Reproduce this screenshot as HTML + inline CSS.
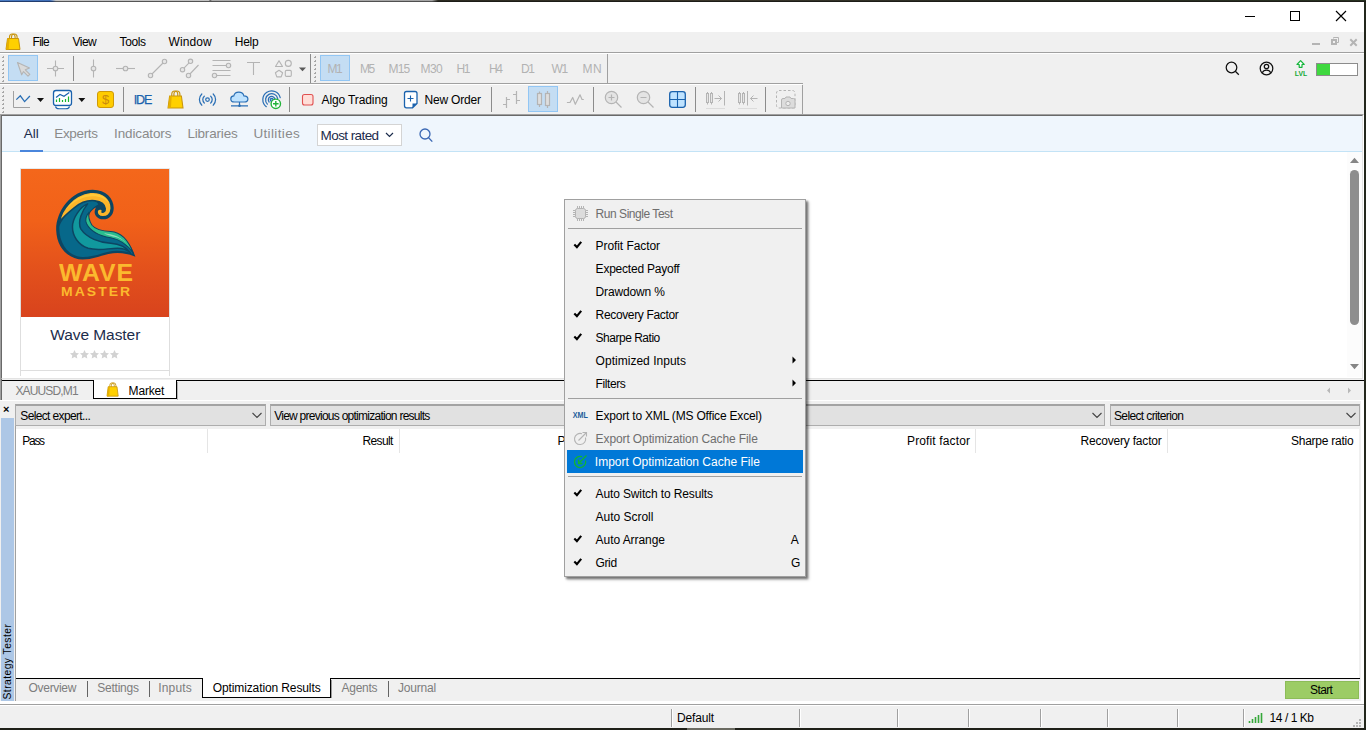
<!DOCTYPE html>
<html lang="en"><head>
<meta charset="utf-8">
<title>MetaTrader 5 - Strategy Tester</title>
<style>
*{box-sizing:border-box;margin:0;padding:0}
html,body{width:1366px;height:730px;overflow:hidden}
body{position:relative;background:#23271c;font-family:"Liberation Sans",sans-serif;font-size:12px;color:#000}
div,span,svg{position:absolute}
svg{overflow:visible;left:0;top:0}
.win{left:0;top:2px;width:1364px;height:726px;background:#f0f0f0}
.t{white-space:nowrap;line-height:16px;height:16px;font-size:12px}
.g{color:#b2b2b2}
.dg{color:#7d7d7d}
.h{height:1px;left:0}
.v{width:1px}
.sep{width:1px;background:#8c8c8c}
.selbtn{background:#c4ddf3;border:1px solid #92c6f4}
.combo{background:#e1e1e1;border:1px solid #adadad;border-top:2px solid #a3a3a3;height:22px;top:404px}
.mk{font-size:13.5px;color:#8a8a8a}
.mi{font-size:12px;color:#000}
.col{top:429px;width:1px;height:24px;background:#e5e5e5}
.sdiv{top:709px;width:2px;height:18px;background:#fff;border-left:1px solid #a0a0a0}
</style>
</head>
<body>
<div class="win"></div>
<!-- title bar -->
<div style="left:0;top:2px;width:1364px;height:30px;background:#fff"></div>
<!-- menu bar -->
<span class="t" style="left: 32.6px; letter-spacing: -0.75px; top: 34px;">File</span>
<span class="t" style="left: 72.6px; letter-spacing: -0.58px; top: 34px;">View</span>
<span class="t" style="left: 119.6px; letter-spacing: -0.4px; top: 34px;">Tools</span>
<span class="t" style="left: 168.6px; letter-spacing: 0.08px; top: 34px;">Window</span>
<span class="t" style="left: 234.8px; letter-spacing: -0.27px; top: 34px;">Help</span>
<!-- toolbar lines -->
<div class="h" style="top:52px;width:1364px;background:#a0a0a0"></div>
<div class="h" style="top:53px;width:1364px;background:#fff"></div>
<div class="h" style="top:83px;width:803px;background:#a0a0a0"></div>
<div class="h" style="top:84px;width:802px;background:#fff"></div>
<div class="v" style="left:802px;top:85px;height:29px;background:#a0a0a0"></div>
<div class="v" style="left:607px;top:54px;height:29px;background:#a0a0a0"></div>
<!-- toolbar 1 -->
<div class="selbtn" style="left:8px;top:55px;width:30px;height:26px"></div>
<div class="sep" style="left:73px;top:56px;height:25px"></div>
<div class="sep" style="left:310px;top:54px;height:29px"></div>
<div class="selbtn" style="left:320px;top:55px;width:30px;height:26px"></div>
<span class="t g" style="left: 327.6px; letter-spacing: -1.5px; top: 61px;">M1</span>
<span class="t g" style="left: 360px; letter-spacing: -1.4px; top: 61px;">M5</span>
<span class="t g" style="left: 388.6px; letter-spacing: -0.83px; top: 61px;">M15</span>
<span class="t g" style="left: 420.6px; letter-spacing: -0.63px; top: 61px;">M30</span>
<span class="t g" style="left: 456.6px; letter-spacing: -1.5px; top: 61px;">H1</span>
<span class="t g" style="left: 489px; letter-spacing: -1.5px; top: 61px;">H4</span>
<span class="t g" style="left: 521px; letter-spacing: -1.5px; top: 61px;">D1</span>
<span class="t g" style="left: 551.6px; letter-spacing: -1.5px; top: 61px;">W1</span>
<span class="t g" style="left: 582.4px; letter-spacing: 0.6px; top: 61px;">MN</span>
<!-- toolbar 2 -->
<div class="sep" style="left:123px;top:87px;height:25px"></div>
<div class="sep" style="left:289px;top:87px;height:25px"></div>
<div class="sep" style="left:491px;top:87px;height:25px"></div>
<div class="sep" style="left:593px;top:87px;height:25px"></div>
<div class="sep" style="left:695px;top:87px;height:25px"></div>
<div class="sep" style="left:765px;top:87px;height:25px"></div>
<div class="selbtn" style="left:528px;top:86px;width:30px;height:26px"></div>
<span class="t" style="color: rgb(26, 98, 173); font-size: 12.5px; -webkit-text-stroke: 0.25px rgb(26, 98, 173); left: 133.8px; letter-spacing: -1.15px; top: 92px;">IDE</span>
<span class="t" style="left: 321.5px; letter-spacing: -0.11px; top: 92px;">Algo Trading</span>
<span class="t" style="left: 424.5px; letter-spacing: -0.19px; top: 92px;">New Order</span>
<!-- market pane -->
<div style="left:0;top:114px;width:1364px;height:266px;background:#fff;border-top:1px solid #a0a0a0;border-left:1px solid #a0a0a0;border-right:1px solid #fff;border-bottom:1px solid #f0f0f0"></div>
<div style="left:1px;top:115px;width:1362px;height:264px;border-top:1px solid #696969;border-left:1px solid #696969;border-right:1px solid #e3e3e3;border-bottom:1px solid #e3e3e3"></div>
<div style="left:2px;top:116px;width:1360px;height:35px;background:#eff6fd"></div>
<div class="h" style="left:2px;top:151px;width:1360px;background:#c3e3f6"></div>
<div style="left:20px;top:150px;width:23px;height:2px;background:#4a86dc"></div>
<span class="t mk" style="color: rgb(28, 44, 76); left: 23.8px; top: 125.9px;">All</span>
<span class="t mk" style="left: 54.3px; letter-spacing: -0.34px; top: 125.9px;">Experts</span>
<span class="t mk" style="left: 114px; letter-spacing: -0.12px; top: 125.9px;">Indicators</span>
<span class="t mk" style="left: 187.4px; letter-spacing: -0.18px; top: 125.9px;">Libraries</span>
<span class="t mk" style="left: 253.4px; letter-spacing: 0.36px; top: 125.9px;">Utilities</span>
<div style="left:317px;top:124px;width:85px;height:22px;background:#fff;border:1px solid #d4d4d4"></div>
<span class="t" style="font-size: 13.5px; color: rgb(28, 44, 76); left: 320.6px; letter-spacing: -0.59px; top: 127.5px;">Most rated</span>
<!-- card -->
<div style="left:20px;top:168px;width:150px;height:208px;border-left:1px solid #dedede;border-right:1px solid #dedede"></div>
<div class="h" style="left:20px;top:370px;width:150px;background:#dedede"></div>
<div class="h" style="left:20px;top:168px;width:150px;background:#e6ebee"></div>
<div style="left:21px;top:169px;width:148px;height:148px;background:linear-gradient(180deg,#f4671b 0%,#f16119 35%,#e2501c 70%,#d8431d 100%)"></div>
<span class="t" style="font-size: 15.5px; color: rgb(28, 44, 76); line-height: 20px; height: 20px; left: 50.2px; letter-spacing: -0.06px; top: 324.5px;">Wave Master</span>
<!--LOGO-->
<svg width="92" height="82" viewBox="0 0 819 730" style="left:50px;top:182px">
 <path d="M760 665C700 640 620 620 520 640C440 660 380 690 290 690C170 690 60 590 55 430C50 270 180 70 380 68C500 68 570 150 567 235C565 300 520 335 470 332C425 330 392 295 398 260C400 245 405 235 410 228C360 250 330 310 350 360C375 420 450 455 540 458C640 460 720 540 760 665Z" fill="#0c4663"></path>
 <path d="M82 400C120 300 230 180 330 165C380 158 420 175 430 200C400 215 345 250 332 320C335 400 420 470 540 480C630 485 700 540 738 642C680 615 600 605 520 620C440 640 370 670 290 668C180 665 82 570 82 400Z" fill="#07688a"></path>
 <path d="M335 195C270 220 200 320 200 400C200 480 250 560 340 590C430 615 520 590 600 590C650 590 690 605 715 630C680 580 620 550 540 545C440 540 330 500 275 420C240 350 290 250 335 195Z" fill="#11999e" stroke="#0c4663" stroke-width="13" stroke-linejoin="round"></path>
 <path d="M348 268C338 310 352 350 374 385C402 420 462 438 540 441C622 446 692 502 740 632C692 562 622 512 540 497C450 482 362 442 326 372C310 340 322 300 348 268Z" fill="#2bbd8e" stroke="#0c4663" stroke-width="9" stroke-linejoin="round"></path>
 <path d="M480 455C560 470 640 480 722 592C680 530 620 495 560 485C530 478 500 470 480 455Z" fill="#93dfbc"></path>
 <path d="M85 355C100 250 200 115 360 92C470 82 548 150 545 235C543 290 505 312 468 310C435 307 415 285 420 260C424 243 440 236 455 242C470 250 468 262 462 268C478 272 494 260 492 236C488 200 450 174 400 167C340 160 275 180 215 230C155 278 112 318 85 355Z" fill="#fbb52a" stroke="#0c4663" stroke-width="13" stroke-linejoin="round"></path>
 <path d="M140 245C200 160 285 115 362 106C440 100 505 135 525 190C485 130 400 116 320 134C250 150 190 195 140 245Z" fill="#ffc938"></path>
</svg>
<span class="t" style="font-size: 23px; font-weight: bold; color: rgb(251, 185, 46); line-height: 26px; height: 26px; transform: scaleX(1.08); transform-origin: 0px 0px; left: 58.9px; letter-spacing: 0.82px; top: 260.3px;">WAVE</span>
<span class="t" style="font-size: 13.3px; font-weight: bold; color: rgb(251, 185, 46); transform: scaleX(1.05); transform-origin: 0px 0px; left: 60.6px; letter-spacing: 1.95px; top: 283.9px;">MASTER</span>
<!--/LOGO-->
<!-- scrollbar -->
<div style="left:1347px;top:152px;width:15px;height:225px;background:#fcfcfc"></div>
<div style="left:1350px;top:170px;width:9px;height:155px;border-radius:4.500px;background:#8e8e8e"></div>
<!-- chart tabs -->
<div style="left:0;top:380px;width:1364px;height:20px;background:#f0f0f0"></div>
<div class="v" style="left:0;top:116px;height:284px;background:#a0a0a0"></div><div class="v" style="left:1px;top:379px;height:21px;background:#696969"></div>
<div class="h" style="left:2px;top:380px;width:92px;background:#000"></div>
<div class="h" style="left:176px;top:380px;width:1188px;background:#000"></div>
<div style="left:93px;top:380px;width:84px;height:19px;background:#fff;border:1px solid #000;border-top:0"></div>
<div class="v" style="left:177px;top:382px;height:18px;background:#b4b4b4"></div>
<span class="t dg" style="left: 15.4px; letter-spacing: -0.84px; top: 383px;">XAUUSD,M1</span>
<span class="t" style="left: 128.6px; letter-spacing: -0.19px; top: 383px;">Market</span>
<!-- strategy tester -->
<div style="left:1px;top:418px;width:13px;height:284px;background:#adc7e6"></div>
<div class="v" style="left:15px;top:404px;height:297px;background:#a0a0a0"></div>
<div style="left:16px;top:429px;width:1343px;height:249px;background:#fff"></div>
<div class="h" style="left:16px;top:678px;width:1344px;background:#000"></div>
<div style="left:1361px;top:400px;width:3px;height:304px;background:#fff"></div>
<div class="h" style="left:0;top:400px;width:1364px;background:#fff"></div>
<span class="t" style="left:3px;top:401px;font-weight:bold;font-size:11px">×</span>
<div class="combo" style="left:15px;width:251px"></div>
<div class="combo" style="left:270px;width:835px"></div>
<div class="combo" style="left:1110px;width:250px"></div>
<span class="t" style="left: 20.3px; letter-spacing: -0.64px; top: 408px;">Select expert...</span>
<span class="t" style="left: 274.2px; letter-spacing: -0.74px; top: 408px;">View previous optimization results</span>
<span class="t" style="left: 1114px; letter-spacing: -0.63px; top: 408px;">Select criterion</span>
<div class="col" style="left:207px"></div><div class="col" style="left:399px"></div><div class="col" style="left:591px"></div><div class="col" style="left:783px"></div><div class="col" style="left:975px"></div><div class="col" style="left:1167px"></div>
<span class="t" style="left: 22.3px; letter-spacing: -1.29px; top: 433px;">Pass</span>
<span class="t" style="left: 362.5px; letter-spacing: -0.64px; top: 433px;">Result</span>
<span class="t" style="left: 557.5px; letter-spacing: -0.03px; top: 433px;">Profit</span>
<span class="t" style="left: 744px; letter-spacing: -0.58px; top: 433px;">Trades</span>
<span class="t" style="left: 907px; letter-spacing: 0.14px; top: 433px;">Profit factor</span>
<span class="t" style="left: 1080.5px; letter-spacing: -0.2px; top: 433px;">Recovery factor</span>
<span class="t" style="left: 1291px; letter-spacing: -0.25px; top: 433px;">Sharpe ratio</span>
<!-- bottom tabs -->
<div style="left:202px;top:678px;width:129px;height:20px;background:#fff;border:1px solid #000;border-top:0"></div>
<div class="v" style="left:331px;top:680px;height:18px;background:#9a9a9a"></div>
<span class="t dg" style="left: 28.6px; letter-spacing: -0.32px; top: 680px;">Overview</span>
<span class="t dg" style="left: 97.2px; letter-spacing: -0.22px; top: 680px;">Settings</span>
<span class="t dg" style="left: 158.3px; letter-spacing: 0.16px; top: 680px;">Inputs</span>
<span class="t" style="left: 212.7px; letter-spacing: -0.11px; top: 680px;">Optimization Results</span>
<span class="t dg" style="left: 341.5px; letter-spacing: -0.25px; top: 680px;">Agents</span>
<span class="t dg" style="left: 398px; letter-spacing: -0.2px; top: 680px;">Journal</span>
<div class="v" style="left:87px;top:681px;height:16px;background:#646464"></div>
<div class="v" style="left:149px;top:681px;height:16px;background:#646464"></div>
<div class="v" style="left:388px;top:681px;height:16px;background:#646464"></div>
<div style="left:1285px;top:681px;width:74px;height:18px;background:#9ccc65;border:1px solid #8cbc58"></div>
<span class="t" style="left: 1310px; letter-spacing: -0.6px; top: 682px;">Start</span>
<span class="t" style="left:0;top:0;transform-origin:0 0;transform:translate(0px,699.500px) rotate(-90deg);font-size:10.300px;letter-spacing:.45px">Strategy Tester</span>
<!-- status bar -->
<div style="left:0;top:701px;width:1364px;height:3px;background:#fff"></div>
<div class="h" style="top:704px;width:1364px;background:#a0a0a0"></div>
<div class="h" style="top:705px;width:1364px;background:#fff"></div>
<div class="sdiv" style="left:671px"></div><div class="sdiv" style="left:799px"></div><div class="sdiv" style="left:897px"></div><div class="sdiv" style="left:968px"></div><div class="sdiv" style="left:1040px"></div><div class="sdiv" style="left:1107px"></div><div class="sdiv" style="left:1177px"></div><div class="sdiv" style="left:1243px"></div>
<span class="t" style="left: 677px; letter-spacing: -0.15px; top: 710px;">Default</span>
<span class="t" style="left: 1269.6px; letter-spacing: -0.45px; top: 710px;">14 / 1 Kb</span>
<!--ICONS-->
<svg width="1366" height="730" viewBox="0 0 1366 730">
<!-- window controls -->
<g stroke="#000" fill="none" stroke-width="1">
 <path d="M1245 16.500h10"></path>
 <rect x="1290.500" y="11.500" width="9" height="9"></rect>
 <path d="M1336 11l10 10M1346 11l-10 10" stroke-width="1.15"></path>
</g>
<!-- mdi controls -->
<g stroke="#b4b4b4" fill="none">
 <path d="M1312 44h8" stroke-width="2"></path>
 <rect x="1332" y="40" width="4" height="4" stroke-width="2"></rect>
 <path d="M1333.500 38.500v-1h5v5h-1.500" stroke-width="1"></path>
 <path d="M1351 40l5 5M1356 40l-5 5" stroke-width="2" stroke-linecap="square"></path>
</g>
<!-- app bag icon in menu -->
<g id="bag">
 <path d="M9.500 38.500v-1.500a2.800 3 0 0 1 5.600 0v1.500" fill="none" stroke="#c8950f" stroke-width="1.100"></path>
 <path d="M7.500 38.500h11l1.500 11h-14z" fill="#ffd000" stroke="#c8950f" stroke-width="1"></path>
 <path d="M7.500 38.500h2l-.8 11h-2.700z" fill="#e6b000"></path>
 <path d="M11.500 38.500v-1.500a2.800 3 0 0 1 5.600 0v1.500" fill="none" stroke="#c8950f" stroke-width="1.100"></path>
</g>
<!-- grips -->
<g fill="#a6a6a6">
 <path id="gp" d="M2 57h2v1h-2zM3 56h1v1h-1z"></path>
<use href="#gp" y="4"></use><use href="#gp" y="8"></use><use href="#gp" y="12"></use><use href="#gp" y="16"></use><use href="#gp" y="20"></use><use href="#gp" y="24"></use>
<use href="#gp" x="312" y="0"></use><use href="#gp" x="312" y="4"></use><use href="#gp" x="312" y="8"></use><use href="#gp" x="312" y="12"></use><use href="#gp" x="312" y="16"></use><use href="#gp" x="312" y="20"></use><use href="#gp" x="312" y="24"></use>
<use href="#gp" y="31"></use><use href="#gp" y="35"></use><use href="#gp" y="39"></use><use href="#gp" y="43"></use><use href="#gp" y="47"></use><use href="#gp" y="51"></use><use href="#gp" y="55"></use>
</g>
<!-- toolbar 1 icons (disabled gray) -->
<g stroke="#b4b4b4" fill="none" stroke-width="1.100">
 <path d="M17.500 62.500l12 5.500l-4.200 1.800l4.500 4.500l-1.800 1.800l-4.500-4.500l-1.800 3.200z" fill="#dadada" stroke-linejoin="round"></path>
 <path d="M47 68.500h17M55.500 60.500v16"></path><circle cx="55.500" cy="68.500" r="2.300" fill="#e6e6e6"></circle>
 <path d="M93.500 59.500v18"></path><circle cx="93.500" cy="68.500" r="2.300" fill="#e6e6e6"></circle>
 <path d="M116 68.500h19"></path><circle cx="125.500" cy="68.500" r="2.300" fill="#e6e6e6"></circle>
 <path d="M150.500 75.500l14-14"></path><circle cx="164.500" cy="61.500" r="2.200" fill="#e6e6e6"></circle><circle cx="150.500" cy="75.500" r="2.200" fill="#e6e6e6"></circle>
 <path d="M182.500 69.700l8-8.400M188.500 75.500l10-10.500"></path><circle cx="190.500" cy="61.300" r="2.200" fill="#e6e6e6"></circle><circle cx="182.500" cy="69.700" r="2.200" fill="#e6e6e6"></circle><circle cx="188.500" cy="75.500" r="2.200" fill="#e6e6e6"></circle>
 <path d="M212.500 60.500h18M212.500 65.500h14M212.500 70.500h18M217 75.500h13.500"></path><circle cx="228.500" cy="65.500" r="2.200" fill="#e6e6e6"></circle><circle cx="214.500" cy="75.500" r="2.200" fill="#e6e6e6"></circle>
 <path d="M247 62.500h13M253.500 62.500v12.500"></path>
 <path d="M279 60.700l3.500 5.800h-7z" stroke-linejoin="round"></path><circle cx="288.300" cy="63.400" r="3"></circle>
 <path d="M279 70.200l3.600 2.600l-1.400 4.100h-4.400l-1.400-4.100z" stroke-linejoin="round"></path><rect x="285.300" y="70.400" width="6" height="6" rx="1.200"></rect>
</g>
<path d="M299 67.500h7l-3.500 3.700z" fill="#5a5a5a"></path>
<!-- right icons toolbar1 -->
<g stroke="#111" fill="none" stroke-width="1.250">
 <circle cx="1231.500" cy="67.500" r="5.300"></circle><path d="M1235.300 71.300l3.500 3.500"></path>
 <circle cx="1266.500" cy="68.500" r="6.300"></circle><circle cx="1266.500" cy="66.500" r="2.200"></circle><path d="M1262.300 72.800a4.500 4 0 0 1 8.400 0"></path>
</g>
<path d="M1300.600 60.700l3.600 3.800h-2.200v2.800h-2.800v-2.800h-2.200z" fill="#fff" stroke="#14b53a" stroke-width="1.200" stroke-linejoin="round"></path>
<text x="1294.800" y="75.600" font-family="Liberation Sans, sans-serif" font-size="7.600" font-weight="bold" fill="#12a834" textLength="12.300" lengthAdjust="spacingAndGlyphs">LVL</text>
<rect x="1316.500" y="63.500" width="41" height="12" fill="#fff" stroke="#8c8c8c"></rect>
<rect x="1317" y="64" width="13" height="11" fill="#3fd83f"></rect>
<!-- toolbar 2 icons -->
<path d="M13.500 91v16.500h16.500" fill="none" stroke="#a0a0a0" stroke-width="1"></path>
<path d="M16.300 99.600l4-3.800l4.300 5.800l5.300-5.600" fill="none" stroke="#2a6fb5" stroke-width="1.300"></path>
<path d="M37 98h7l-3.500 4zM78.300 98h7l-3.500 4z" fill="#111"></path>
<g stroke="#1a62ad" fill="none" stroke-width="1.300">
 <rect x="53.500" y="90.500" width="18" height="15" rx="2.500" fill="#fff"></rect>
 <path d="M55.500 106.500c.5 1.600 1.500 2.300 3.500 2.300h7c2 0 3-.7 3.500-2.300" stroke-width="1.100" fill="#fff"></path>
 <path d="M56 97.500l4-3l4 1.800l5.300-3.800" stroke-width="1.100"></path>
</g>
<path d="M56.500 99.500v2.500M59.500 98v4M62.500 100v2M65.500 99v3M68.500 96.500v5.500" stroke="#18b52f" stroke-width="1.200" fill="none"></path>
<rect x="97.500" y="91.500" width="16" height="16" rx="2.500" fill="#ffcc00" stroke="#cf9a08"></rect>
<text x="105.500" y="104.300" text-anchor="middle" font-family="Liberation Sans, sans-serif" font-size="13" fill="#c98a10">$</text>
<use href="#bag" transform="translate(161.600 53.600) scale(1.07 1.1)"></use>
<g stroke="#2a6fb5" fill="none" stroke-width="1.250" stroke-linecap="round">
 <circle cx="207.500" cy="99.600" r="1.800"></circle>
 <path d="M204.300 96.200a4.600 4.600 0 0 0 0 6.800M210.700 96.200a4.600 4.600 0 0 1 0 6.800M201.800 94a7.800 7.800 0 0 0 0 11.200M213.200 94a7.800 7.800 0 0 1 0 11.200"></path>
</g>
<path d="M234.500 102c-2.200 0-3.700-1.300-3.700-3.100c0-1.700 1.300-2.900 3-3c.5-2.300 2.600-3.800 5-3.800c2.500 0 4.500 1.500 5.100 3.700c2.300 0 4 1.300 4 3.200c0 1.800-1.500 3-3.600 3z" fill="#bfe3ff" stroke="#2a6fb5" stroke-width="1.200"></path>
<path d="M239.500 102v3.500M231 105.800h17" stroke="#2a6fb5" stroke-width="1.200" fill="none"></path><circle cx="239.500" cy="105.800" r="1.300" fill="#2a6fb5"></circle>
<g stroke="#2a6fb5" fill="none" stroke-width="1.250" stroke-linecap="round">
 <circle cx="271.700" cy="99.800" r="1.500" fill="#8fbce6"></circle>
 <path d="M269.1 102.0A3.4 3.4 0 1 1 275.1 99.5M267.4 104.1A6.1 6.1 0 1 1 277.7 98.7M266.3 106.7A8.8 8.8 0 1 1 280.2 97.7"></path>
</g>
<circle cx="275.800" cy="103.800" r="4.700" fill="#fff" stroke="#22b33a" stroke-width="1.400"></circle>
<path d="M273 103.800h5.600M275.800 101v5.600" stroke="#22b33a" stroke-width="1.400"></path>
<rect x="302.500" y="94.500" width="10.500" height="10.500" rx="2" fill="#ffded8" stroke="#e05050" stroke-width="1.100"></rect>
<path d="M406.500 91.500h8.500a2 2 0 0 1 2 2v10l-4.500 4.300h-6a2 2 0 0 1-2-2v-12.300a2 2 0 0 1 2-2z" fill="#fff" stroke="#1a62ad" stroke-width="1.300"></path>
<path d="M417 103.500h-4.500v4.300z" fill="#1a62ad"></path>
<path d="M407.500 98.500h6M410.500 95.500v6" stroke="#1a62ad" stroke-width="1.100"></path>
<!-- chart type icons -->
<g stroke="#b4b4b4" fill="none" stroke-width="1.200">
 <path d="M506.500 97v11M506.500 99.500h3.500M503 104.500h3.500M516.500 91v13M513 94.500h3.500M516.500 100.500h3.500"></path>
 <path d="M539.500 91.500v15.500M547.500 91v17"></path>
 <rect x="537.500" y="93.500" width="4" height="11" fill="#dedede"></rect><rect x="545.500" y="93.500" width="4" height="12" fill="#dedede"></rect>
 <path d="M566.900 102.500h3.100l2.700-5l2.600 6.800l4.700-9.500l2 4.700h1.800" stroke-linejoin="round"></path>
 <circle cx="611.500" cy="97.500" r="6.200" fill="#e4e4e4"></circle><path d="M616 102l5.500 5.500M608.500 97.500h6M611.500 94.500v6"></path>
 <circle cx="643.500" cy="97.500" r="6.200" fill="#e4e4e4"></circle><path d="M648 102l5.500 5.500M640.500 97.500h6"></path>
</g>
<rect x="669.700" y="91.700" width="15.600" height="15.600" rx="2.500" fill="#bfe3ff" stroke="#1a62ad" stroke-width="1.300"></rect>
<path d="M677.500 92v15M670 99.500h15" stroke="#1a62ad" stroke-width="1.100"></path>
<g stroke="#b4b4b4" fill="none" stroke-width="1">
 <path d="M707.500 92v12.500M711.500 92v12.500M739.500 92v12.500M743.500 92v12.500"></path>
 <rect x="706.500" y="93.500" width="2" height="9" fill="#e6e6e6"></rect><rect x="710.500" y="93.500" width="2" height="9" fill="#e6e6e6"></rect>
 <rect x="738.500" y="93.500" width="2" height="9" fill="#e6e6e6"></rect><rect x="742.500" y="93.500" width="2" height="9" fill="#e6e6e6"></rect>
 <path d="M714.500 98.500h7M718.500 95.500l3 3l-3 3M724.500 91v14.500"></path>
 <path d="M747.500 91v14.500M750.500 98.500h7M753.500 95.500l-3 3l3 3"></path>
 <path d="M706 108.500h19M738 108.500h19" stroke="#dcdcdc"></path>
 <rect x="776.500" y="90.500" width="18.500" height="17.500" rx="2.500" stroke-dasharray="2.500 2"></rect>
 <path d="M783 98.500h2l1-1.500h4l1 1.500h2.500a1.500 1.500 0 0 1 1.500 1.500v8h-13.500v-8a1.500 1.500 0 0 1 1.500-1.500z" fill="#dcdcdc"></path>
 <circle cx="788" cy="103.500" r="2.200" fill="#ececec"></circle>
</g>
<!-- market header icons -->
<path d="M386 133l3.500 3.500l3.500-3.500" fill="none" stroke="#1c2c4c" stroke-width="1.200"></path>
<circle cx="425" cy="134" r="5" fill="none" stroke="#3b68b4" stroke-width="1.300"></circle><path d="M428.600 137.800l3.700 3.800" stroke="#3b68b4" stroke-width="1.300"></path>
<!-- stars -->
<g fill="#d2d2d2">
 <path id="star" d="M74.500 350l1.400 2.900l3.100.4l-2.300 2.200l.6 3.100l-2.800-1.500l-2.800 1.500l.6-3.100l-2.300-2.200l3.100-.4z"></path>
 <use href="#star" x="10"></use><use href="#star" x="20"></use><use href="#star" x="30"></use><use href="#star" x="40"></use>
</g>
<!-- scrollbar arrows -->
<path d="M1350 163h9l-4.500-5.200zM1350 364h9l-4.500 5.200z" fill="#858585"></path>
<!-- tab bar arrows -->
<path d="M1330 387.500v6l-3-3zM1348 387.500v6l3-3z" fill="#b8b8b8"></path>
<!-- market tab bag -->
<use href="#bag" transform="translate(102.200 353.600) scale(.8 .86)"></use>
<!-- combo chevrons -->
<g fill="none" stroke="#444" stroke-width="1.100">
 <path d="M252.500 413l4.500 4.500l4.500-4.500M1092.500 413l4.500 4.500l4.500-4.500M1346.500 413l4.500 4.500l4.500-4.500"></path>
</g>
<!-- status icons -->
<path d="M1249.500 721v2M1252.500 719v4M1255.500 717v6M1258.500 715v8M1261.500 713v10" stroke="#35a83a" stroke-width="1.600" fill="none"></path>
<g fill="#b5b5b5"><path d="M1359 725h2v2h-2zM1356 725h2v2h-2zM1353 725h2v2h-2zM1359 722h2v2h-2zM1356 722h2v2h-2zM1359 719h2v2h-2z"></path></g>
</svg>
<!--/ICONS-->
<!--MENU-->
<div style="left:564px;top:199px;width:242px;height:378px;background:#f0f0f0;border:1px solid #a0a0a0;box-shadow:2px 2px 2px rgba(0,0,0,.45),3px 3px 3px rgba(0,0,0,.18)"></div>
<div style="left:567px;top:450px;width:236px;height:23px;background:#0078d7"></div>
<div class="h" style="left:568px;top:228px;width:234px;background:#a0a0a0"></div>
<div class="h" style="left:568px;top:398px;width:234px;background:#a0a0a0"></div>
<div class="h" style="left:568px;top:476px;width:234px;background:#a0a0a0"></div>
<span class="t mi" style="color: rgb(110, 110, 110); left: 595.6px; letter-spacing: -0.46px; top: 206px;">Run Single Test</span>
<span class="t mi" style="left: 595.6px; letter-spacing: -0.08px; top: 238px;">Profit Factor</span>
<span class="t mi" style="left: 595.6px; letter-spacing: -0.22px; top: 261px;">Expected Payoff</span>
<span class="t mi" style="left: 595.6px; letter-spacing: -0.16px; top: 284px;">Drawdown %</span>
<span class="t mi" style="left: 595.6px; letter-spacing: -0.35px; top: 307px;">Recovery Factor</span>
<span class="t mi" style="left: 595.6px; letter-spacing: -0.49px; top: 330px;">Sharpe Ratio</span>
<span class="t mi" style="left: 595.6px; letter-spacing: 0.02px; top: 353px;">Optimized Inputs</span>
<span class="t mi" style="left: 595.6px; letter-spacing: -0.41px; top: 376px;">Filters</span>
<span class="t mi" style="left: 595.6px; letter-spacing: -0.19px; top: 408px;">Export to XML (MS Office Excel)</span>
<span class="t mi" style="color: rgb(110, 110, 110); left: 595.6px; letter-spacing: -0.11px; top: 431px;">Export Optimization Cache File</span>
<span class="t mi" style="color: rgb(255, 255, 255); left: 594.8px; letter-spacing: 0.01px; top: 454px;">Import Optimization Cache File</span>
<span class="t mi" style="left: 595.6px; letter-spacing: -0.13px; top: 486px;">Auto Switch to Results</span>
<span class="t mi" style="left: 595.6px; letter-spacing: -0.02px; top: 509px;">Auto Scroll</span>
<span class="t mi" style="left: 595.6px; letter-spacing: -0.06px; top: 532px;">Auto Arrange</span>
<span class="t mi" style="left: 595.6px; letter-spacing: -0.4px; top: 555px;">Grid</span>
<span class="t mi" style="left: 790.8px; top: 532px;">A</span>
<span class="t mi" style="left: 791px; top: 555px;">G</span>
<svg width="1366" height="730" viewBox="0 0 1366 730">
 <g fill="none" stroke="#000" stroke-width="2.1" stroke-linejoin="miter">
  <path id="ck" d="M574.300 244.500l2.600 2.600l4.300-5.300"></path>
  <use href="#ck" y="69"></use><use href="#ck" y="92"></use><use href="#ck" y="248"></use><use href="#ck" y="294"></use><use href="#ck" y="317"></use>
 </g>
 <path d="M792.500 356.500v7l3.500-3.500zM792.500 379.500v7l3.500-3.500z" fill="#000"></path>
 <text x="572.800" y="418.200" font-family="Liberation Sans, sans-serif" font-size="8.400" font-weight="bold" fill="#1b5e9b" textLength="15.200" lengthAdjust="spacingAndGlyphs">XML</text>
 <!-- chip icon -->
 <g stroke="#b4b4b4" fill="none" stroke-width="1">
  <rect x="575.500" y="208.500" width="10" height="10" rx="2" fill="#dcdcdc"></rect>
  <path d="M577.500 206v2.500M579.500 206v2.500M581.500 206v2.500M583.500 206v2.500M577.500 218.500v2.500M579.500 218.500v2.500M581.500 218.500v2.500M583.500 218.500v2.500M573 210.500h2.500M573 212.500h2.500M573 214.500h2.500M573 216.500h2.500M585.500 210.500h2.500M585.500 212.500h2.500M585.500 214.500h2.500M585.500 216.500h2.500"></path>
 </g>
 <!-- export icon -->
 <g stroke="#b4b4b4" fill="none" stroke-width="1.1">
  <path d="M582 433.700a5.600 5.600 0 1 0 3.500 3.800"></path>
  <path d="M578.500 440.500l8-8M582.500 432.500h4v4"></path>
 </g>
 <!-- import icon -->
 <g stroke="#12b52f" fill="none" stroke-width="1.3">
  <path d="M582 456.700a5.600 5.600 0 1 0 3.500 3.800"></path>
  <path d="M586.500 455.500l-8 8M578.500 459.500v4h4"></path>
 </g>
</svg>
<!--/MENU-->
<!-- desktop strips -->
<div style="left:0;top:728px;width:1366px;height:2px;background:linear-gradient(90deg,#1f2019 0,#1f2019 687px,#6b6b62 687px,#6b6b62 735px,#1f2019 735px)"></div>
<div style="left:0;top:0;width:1366px;height:1px;background:linear-gradient(90deg,#4b7dc4 0,#3f6fb8 50px,#c6c6c6 56px,#c2c2c2 209px,#555 210px,#adadad 212px,#a4a4a4 432px,#2c2b22 438px,#3a362a 700px,#2a2c24 1000px,#26301f 1366px)"></div>
<div style="left:0;top:1px;width:1366px;height:1px;background:linear-gradient(90deg,#223d6e 0,#223d6e 52px,#565656 56px,#505050 432px,#1c1c17 438px,#1c1c17 1366px)"></div>


</body></html>
